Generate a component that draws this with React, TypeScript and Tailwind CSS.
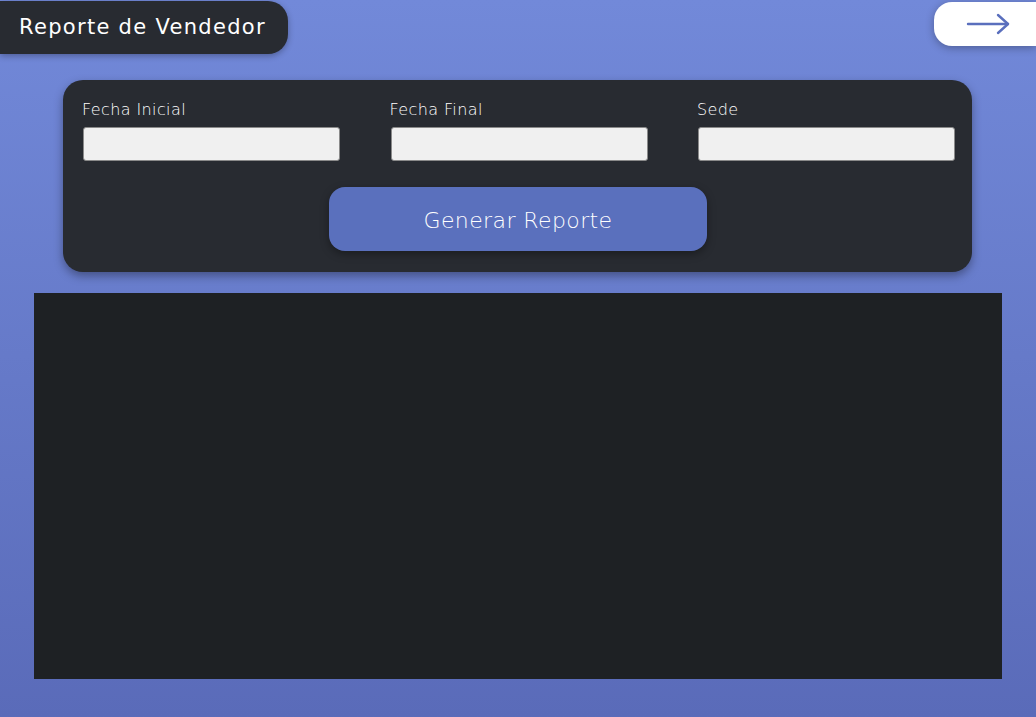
import React from "react";

export default function App() {
  const font = { fontFamily: '"DejaVu Sans", "Open Sans", sans-serif' };
  return (
    <div
      className="w-[1036px] h-[717px] overflow-hidden bg-gradient-to-b from-[#7289d9] to-[#5a6bb9]"
      style={font}
    >
      <div className="flex justify-between items-start">
        <div className="mt-[1px] h-[53px] w-[288px] bg-[#282b31] rounded-r-[20px] flex items-center pl-[19px] shadow-[0_2px_6px_rgba(0,0,0,0.3)]">
          <span className="text-white text-[21px] tracking-[1.3px]">Reporte de Vendedor</span>
        </div>
        <div className="mt-[2px] h-[44px] w-[102px] bg-white rounded-l-[18px] flex items-center pl-[32px] shadow-[0_2px_8px_rgba(0,0,0,0.3)]">
          <svg width="46" height="24" viewBox="0 0 46 24" fill="none" stroke="#5a6fbd" strokeWidth="2.4" strokeLinecap="round" strokeLinejoin="round">
            <path d="M2 12 H42" />
            <path d="M32 3 L42 12 L32 21" />
          </svg>
        </div>
      </div>

      <div className="ml-[63px] mt-[26px] w-[909px] h-[192px] bg-[#282b31] rounded-[20px] shadow-[0_4px_10px_rgba(0,0,0,0.35)] pl-[19px] pr-[17px] pt-[19px]">
        <div className="flex justify-between">
          {["Fecha Inicial", "Fecha Final", "Sede"].map((l) => (
            <div key={l} className="w-[258px] flex flex-col">
              <label className="text-white text-[16px] leading-[22px] font-light tracking-[0.4px]">{l}</label>
              <div className="mt-[6px] h-[34px] bg-[#f0f0f0] border border-[#8a8a8a] rounded-[3px] ml-[1px]" />
            </div>
          ))}
        </div>
        <div className="flex justify-center mt-[26px]">
          <button className="w-[378px] h-[64px] pt-[3px] bg-[#5a70bd] rounded-[16px] text-white text-[22px] font-light tracking-[0.4px] shadow-[0_3px_8px_rgba(0,0,0,0.35)] ml-[-1px]">
            Generar Reporte
          </button>
        </div>
      </div>

      <div className="ml-[34px] mt-[21px] w-[968px] h-[386px] bg-[#1e2124]" />
    </div>
  );
}
